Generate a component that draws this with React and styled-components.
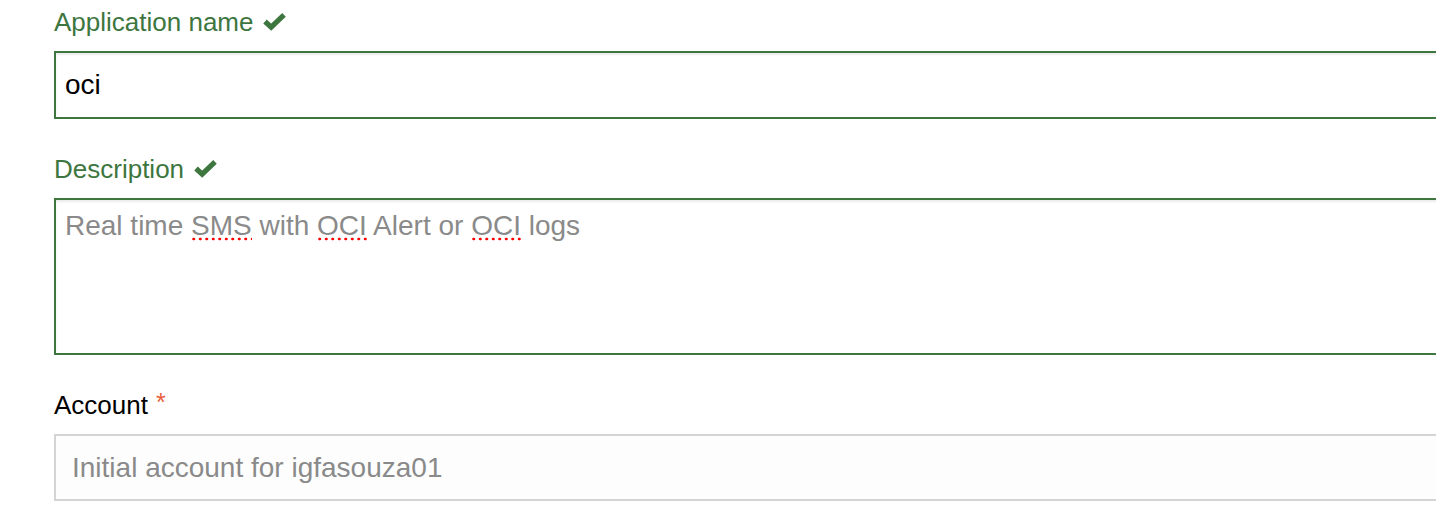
import React from 'react';
import styled, { createGlobalStyle, css } from 'styled-components';

const GlobalStyle = createGlobalStyle`
  html, body {
    margin: 0;
    padding: 0;
    background: #fff;
    overflow: hidden;
  }
  body {
    font-family: "Liberation Sans", Arial, Helvetica, sans-serif;
  }
`;

const green = '#3d763e';

function CheckIcon() {
  return (
    <CheckSvg viewBox="0 0 24 20">
      <polyline points="2,10 8.5,16 22,3" />
    </CheckSvg>
  );
}

export default function App() {
  return (
    <>
      <GlobalStyle />
      <Form>
        <FormGroup>
          <Label $valid>
            Application name <CheckIcon />
          </Label>
          <Input $valid defaultValue="oci" />
        </FormGroup>
        <FormGroup>
          <Label $valid>
            Description <CheckIcon />
          </Label>
          <TextArea $valid>
            <Placeholder>
              Real time <Misspelled>SMS</Misspelled> with <Misspelled>OCI</Misspelled> Alert or{' '}
              <Misspelled>OCI</Misspelled> logs
            </Placeholder>
          </TextArea>
        </FormGroup>
        <FormGroup>
          <Label>
            Account <Required>*</Required>
          </Label>
          <Select>Initial account for igfasouza01</Select>
        </FormGroup>
      </Form>
    </>
  );
}

const Form = styled.div`
  padding: 4px 0 0 54px;
  width: 1420px;
`;

const FormGroup = styled.div`
  margin-bottom: 32px;
`;

const Label = styled.label`
  display: flex;
  align-items: center;
  gap: 10px;
  font-size: 26px;
  line-height: 36px;
  margin-bottom: 11px;
  color: ${(p) => (p.$valid ? green : '#000')};
`;

const CheckSvg = styled.svg`
  width: 23px;
  height: 19px;
  fill: none;
  stroke: ${green};
  stroke-width: 5.4;
  stroke-linejoin: miter;
  stroke-linecap: butt;
  margin-top: -2px;
`;

const Required = styled.span`
  align-self: flex-start;
  color: #e9603f;
  font-size: 25px;
  line-height: 25px;
  margin-left: -2px;
  margin-top: 3px;
`;

const fieldBox = css`
  display: block;
  box-sizing: border-box;
  width: 100%;
  border: 2px solid ${(p) => (p.$valid ? green : '#d4d4d4')};
  background: #fff;
  box-shadow: ${(p) => (p.$valid ? 'inset 0 2px 2px rgba(0, 0, 0, 0.075)' : 'none')};
  font-family: "Liberation Sans", Arial, Helvetica, sans-serif;
  font-size: 28px;
  outline: none;
`;

const Input = styled.input`
  ${fieldBox};
  height: 68px;
  padding: 0 9px;
  color: #000;
`;

const TextArea = styled.div`
  ${fieldBox};
  height: 157px;
  padding: 6px 9px;
  line-height: 39px;
`;

const Placeholder = styled.span`
  color: #8a8a8a;
`;

const Misspelled = styled.span`
  background-image: radial-gradient(circle, #f00 1.2px, transparent 1.7px);
  background-repeat: repeat-x;
  background-size: 6.5px 4px;
  background-position: 6px 100%;
  padding-bottom: 0;
`;

const Select = styled.div`
  ${fieldBox};
  display: flex;
  align-items: center;
  height: 67px;
  padding: 0 16px;
  color: #8a8a8a;
  background: #fdfdfd;
`;
